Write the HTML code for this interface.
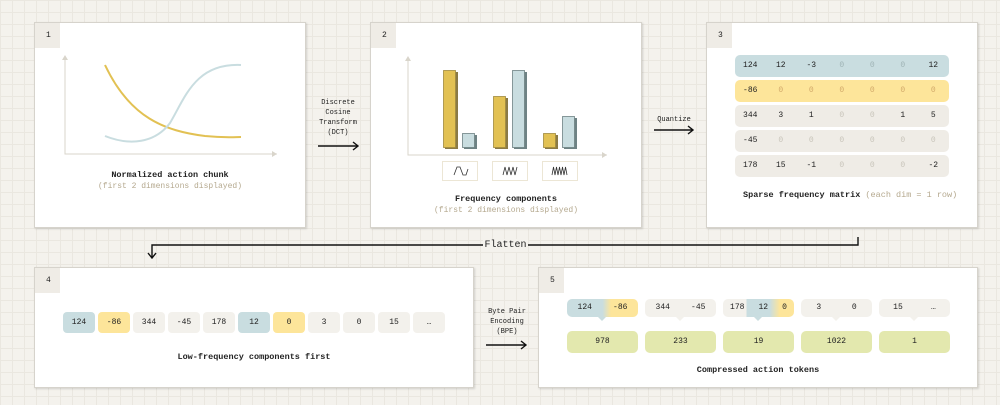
<!DOCTYPE html>
<html><head><style>
*{margin:0;padding:0;box-sizing:border-box}
body{width:1000px;height:405px;overflow:hidden;background-color:#f4f2ed;
background-image:linear-gradient(#eae7e0 1px,transparent 1px),linear-gradient(90deg,#eae7e0 1px,transparent 1px);
background-size:12px 12px;font-family:"Liberation Mono",monospace;font-size:8px;color:#222;position:relative}
.p{position:absolute;background:#fff;border:1px solid #d6d3cc;box-shadow:1px 1px 2px rgba(0,0,0,.15)}
.b{position:absolute;left:0;top:0;width:25px;height:25px;background:#efece6;font-size:8px;line-height:25px;padding-left:11px}
.t{position:absolute;left:0;right:0;text-align:center;font-weight:bold;font-size:8.5px}
.s{position:absolute;left:0;right:0;text-align:center;color:#b5a98f;font-size:8px}
.a{position:absolute;text-align:center;font-size:7px;line-height:10px;color:#222}
.row{position:absolute;left:28px;width:214px;height:22px;border-radius:5px;display:flex}
.row span{width:30.5px;text-align:center;line-height:22px}
.g{color:#c8c4ba}
.tk{position:absolute;top:44px;width:32px;height:21px;border-radius:4px;text-align:center;line-height:21px;background:#f3f1ec}
.bl{background:#c9dde0}.ye{background:#fde59a}
.grp{position:absolute;top:31px;height:18px;width:71px;border-radius:5px;background:#f3f1ec;display:flex;justify-content:space-around;line-height:18px}
.bt{position:absolute;top:63px;height:22px;width:71px;border-radius:5px;background:#e3e8ae;text-align:center;line-height:22px}
.tri{position:absolute;top:49px;width:0;height:0;border-left:4px solid transparent;border-right:4px solid transparent;border-top:4px solid #f3f1ec}
</style></head><body>

<div class="p" style="left:34px;top:22px;width:272px;height:206px">
<div class="b">1</div>
<svg style="position:absolute;left:0;top:0" width="272" height="206">
<path d="M30 33 V131 H242" stroke="#d9d5cb" stroke-width="1" fill="none"/>
<path d="M27 37 L30 32 L33 37Z M237 128 L242 131 L237 134Z" fill="#d9d5cb"/>
<path d="M70 42 C95 95 130 108 170 113 C190 115 200 114 206 114" stroke="#e2c153" stroke-width="2" fill="none"/>
<path d="M70 113 C95 123 120 120 135 100 C150 75 160 40 206 42" stroke="#c9dde0" stroke-width="2" fill="none"/>
</svg>
<div class="t" style="top:147px">Normalized action chunk</div>
<div class="s" style="top:159px">(first 2 dimensions displayed)</div>
</div>

<div class="a" style="left:312px;top:98px;width:52px">Discrete<br>Cosine<br>Transform<br>(DCT)</div>
<svg style="position:absolute;left:317px;top:140px" width="44" height="12"><path d="M1 6 H41 M36 2 L41 6 L36 10" stroke="#111" stroke-width="1.4" fill="none"/></svg>

<div class="p" style="left:370px;top:22px;width:272px;height:206px">
<div class="b">2</div>
<svg style="position:absolute;left:0;top:0" width="272" height="206">
<path d="M37 35 V132 H236" stroke="#d9d5cb" fill="none"/>
<path d="M34 38 L37 33 L40 38Z M231 129 L236 132 L231 135Z" fill="#d9d5cb"/>
<g fill="#8a7a45"><rect x="74" y="49" width="13" height="77"/><rect x="124" y="75" width="13" height="51"/><rect x="174" y="112" width="13" height="14"/></g>
<g fill="#6e8284"><rect x="93" y="112" width="13" height="14"/><rect x="143" y="49" width="13" height="77"/><rect x="193" y="95" width="13" height="31"/></g>
<g stroke-width="0.8">
<rect x="72.5" y="47.5" width="12" height="77" fill="#e2c153" stroke="#a08a40"/>
<rect x="91.5" y="110.5" width="12" height="14" fill="#c9dde0" stroke="#6e8284"/>
<rect x="122.5" y="73.5" width="12" height="51" fill="#e2c153" stroke="#a08a40"/>
<rect x="141.5" y="47.5" width="12" height="77" fill="#c9dde0" stroke="#6e8284"/>
<rect x="172.5" y="110.5" width="12" height="14" fill="#e2c153" stroke="#a08a40"/>
<rect x="191.5" y="93.5" width="12" height="31" fill="#c9dde0" stroke="#6e8284"/>
</g>
<g fill="#fff" stroke="#ece6d5"><rect x="71.5" y="138.5" width="35" height="19"/><rect x="121.5" y="138.5" width="35" height="19"/><rect x="171.5" y="138.5" width="35" height="19"/></g>
<g stroke="#333" stroke-width="0.8" fill="none">
<path d="M83 152 L86 144 L89 144 L92 152 L95 152 L97 146"/>
<path d="M132 152 L134 144 L136 152 L138 144 L140 152 L142 144 L144 152 L146 144"/>
<path d="M181 152 L182.5 144 L184 152 L185.5 144 L187 152 L188.5 144 L190 152 L191.5 144 L193 152 L194.5 144 L196 152"/>
</g>
</svg>
<div class="t" style="top:171px">Frequency components</div>
<div class="s" style="top:183px">(first 2 dimensions displayed)</div>
</div>

<div class="a" style="left:650px;top:115px;width:48px">Quantize</div>
<svg style="position:absolute;left:653px;top:124px" width="44" height="12"><path d="M1 6 H40 M35 2 L40 6 L35 10" stroke="#111" stroke-width="1.4" fill="none"/></svg>

<div class="p" style="left:706px;top:22px;width:272px;height:206px">
<div class="b">3</div>
<div class="row bl" style="top:32px"><span>124</span><span>12</span><span>-3</span><span style="color:#9fb3b5">0</span><span style="color:#9fb3b5">0</span><span style="color:#9fb3b5">0</span><span>12</span></div>
<div class="row ye" style="top:57px"><span>-86</span><span style="color:#d2a96a">0</span><span style="color:#d2a96a">0</span><span style="color:#d2a96a">0</span><span style="color:#d2a96a">0</span><span style="color:#d2a96a">0</span><span style="color:#d2a96a">0</span></div>
<div class="row" style="top:82px;background:#efece6"><span>344</span><span>3</span><span>1</span><span class="g">0</span><span class="g">0</span><span>1</span><span>5</span></div>
<div class="row" style="top:107px;background:#efece6"><span>-45</span><span class="g">0</span><span class="g">0</span><span class="g">0</span><span class="g">0</span><span class="g">0</span><span class="g">0</span></div>
<div class="row" style="top:132px;background:#efece6"><span>178</span><span>15</span><span>-1</span><span class="g">0</span><span class="g">0</span><span class="g">0</span><span>-2</span></div>
<div style="position:absolute;left:36px;top:167px;font-weight:bold;font-size:8.5px">Sparse frequency matrix <span style="font-weight:normal;color:#b5a98f">(each dim = 1 row)</span></div>
</div>

<svg style="position:absolute;left:140px;top:234px" width="725" height="28">
<path d="M718 3 V11 H12 V23 M8 19 L12 24 L16 19" stroke="#111" stroke-width="1.4" fill="none"/>
</svg>
<div style="position:absolute;left:483px;top:239px;width:45px;height:13px;background:#f4f2ed;font-size:10px;text-align:center;line-height:13px">Flatten</div>

<div class="p" style="left:34px;top:267px;width:440px;height:121px">
<div class="b">4</div>
<div class="tk bl" style="left:28px">124</div>
<div class="tk ye" style="left:63px">-86</div>
<div class="tk" style="left:98px">344</div>
<div class="tk" style="left:133px">-45</div>
<div class="tk" style="left:168px">178</div>
<div class="tk bl" style="left:203px">12</div>
<div class="tk ye" style="left:238px">0</div>
<div class="tk" style="left:273px">3</div>
<div class="tk" style="left:308px">0</div>
<div class="tk" style="left:343px">15</div>
<div class="tk" style="left:378px">…</div>
<div class="t" style="top:84px;left:0">Low-frequency components first</div>
</div>

<div class="a" style="left:482px;top:307px;width:50px">Byte Pair<br>Encoding<br>(BPE)</div>
<svg style="position:absolute;left:485px;top:339px" width="44" height="12"><path d="M1 6 H41 M36 2 L41 6 L36 10" stroke="#111" stroke-width="1.4" fill="none"/></svg>

<div class="p" style="left:538px;top:267px;width:440px;height:121px">
<div class="b">5</div>
<div class="grp" style="left:28px;background:linear-gradient(90deg,#c9dde0 50%,#fde59a 62%)"><span>124</span><span>-86</span></div>
<div class="tri" style="left:59px;border-top-color:#c9dde0"></div>
<div class="grp" style="left:106px"><span>344</span><span>-45</span></div>
<div class="tri" style="left:137px"></div>
<div class="grp" style="left:184px;background:linear-gradient(90deg,#f3f1ec 33%,#c9dde0 33%,#c9dde0 66%,#fde59a 80%)"><span>178</span><span>12</span><span>0</span></div>
<div class="tri" style="left:215px;border-top-color:#c9dde0"></div>
<div class="grp" style="left:262px"><span>3</span><span>0</span></div>
<div class="tri" style="left:293px"></div>
<div class="grp" style="left:340px"><span>15</span><span>…</span></div>
<div class="tri" style="left:371px"></div>
<div class="bt" style="left:28px">978</div>
<div class="bt" style="left:106px">233</div>
<div class="bt" style="left:184px">19</div>
<div class="bt" style="left:262px">1022</div>
<div class="bt" style="left:340px">1</div>
<div class="t" style="top:97px">Compressed action tokens</div>
</div>
</body></html>
